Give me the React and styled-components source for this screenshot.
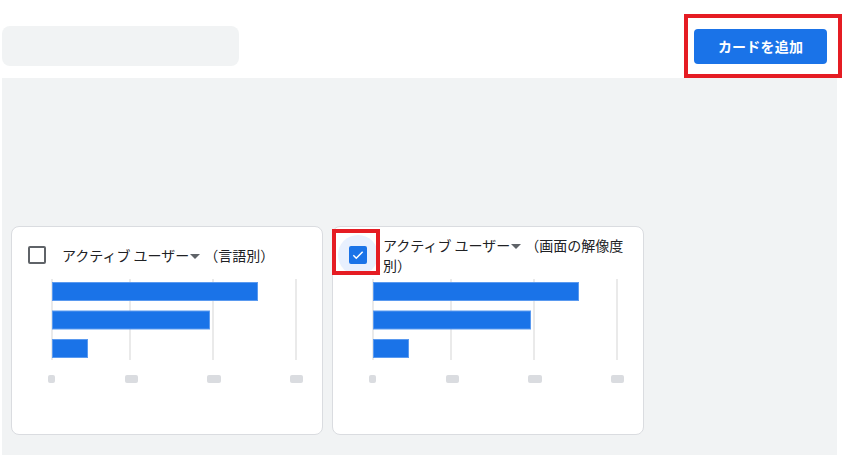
import React from "react";
import styled, { createGlobalStyle } from "styled-components";

const GlobalStyle = createGlobalStyle`
  html, body {
    margin: 0;
    padding: 0;
    background: #ffffff;
  }
  body {
    font-family: "Noto Sans CJK JP", "Noto Sans", Roboto, sans-serif;
    color: #202124;
  }
`;

const cards = [
  { title: "アクティブ ユーザー", suffix: "（言語別）", checked: false, bars: [205, 157, 35] },
  { title: "アクティブ ユーザー", suffix: "（画面の解像度別）", checked: true, bars: [205, 157, 35] },
];

export default function App() {
  return (
    <>
      <GlobalStyle />
      <Page>
        <TopBar>
          <SearchPlaceholder />
          <ButtonWrap>
            <AddButton>カードを追加</AddButton>
            <Highlight $top={-15} $left={-10} $right={-15} $bottom={-14} />
          </ButtonWrap>
        </TopBar>
        <Board>
          {cards.map((c, i) => (
            <Card key={i}>
              <CardHeader>
                <CheckWrap $active={c.checked}>
                  <Checkbox $checked={c.checked}>
                    {c.checked && (
                      <svg width="16" height="16" viewBox="0 0 24 24">
                        <path d="M4 12.5l5 5 11-11" fill="none" stroke="#fff" strokeWidth="2.6" />
                      </svg>
                    )}
                  </Checkbox>
                  {c.checked && <Highlight $top={-6} $left={-6} $right={-2} $bottom={0} />}
                </CheckWrap>
                <Title>
                  {c.title}
                  <Caret />
                  {c.suffix}
                </Title>
              </CardHeader>
              <BarChart bars={c.bars} />
            </Card>
          ))}
        </Board>
      </Page>
    </>
  );
}

function BarChart({ bars }) {
  const grid = [7, 85, 168, 251];
  const labels = [
    [3, 7],
    [80, 13],
    [162, 14],
    [245, 13],
  ];
  return (
    <Chart width="270" height="110" viewBox="0 0 270 110">
      {grid.map((x, i) => (
        <rect key={i} x={x - 0.75} y="0" width="1.5" height="81" fill="#e3e3e3" />
      ))}
      {bars.map((w, i) => (
        <rect
          key={i}
          x="7.5"
          y={3.5 + i * 28.5}
          width={w}
          height="18"
          fill="#1a73e8"
          stroke="#5a9af0"
          strokeWidth="1"
        />
      ))}
      {labels.map(([x, w], i) => (
        <rect key={i} x={x} y="96" width={w} height="8" rx="2" fill="#dadce0" />
      ))}
    </Chart>
  );
}

const Page = styled.div`
  width: 835px;
  margin-left: 2px;
`;

const TopBar = styled.div`
  height: 78px;
  box-sizing: border-box;
  padding: 26px 10px 12px 0;
  display: flex;
  align-items: center;
  justify-content: space-between;
`;

const SearchPlaceholder = styled.div`
  width: 237px;
  height: 40px;
  border-radius: 8px;
  background: #f1f3f4;
`;

const ButtonWrap = styled.div`
  position: relative;
  display: flex;
`;

const AddButton = styled.button`
  height: 35px;
  width: 133px;
  border: none;
  border-radius: 4px;
  background: #1a73e8;
  color: #ffffff;
  font-family: "Noto Sans CJK JP", "Noto Sans", sans-serif;
  font-size: 14px;
  font-weight: 600;
  letter-spacing: 0.2px;
  cursor: pointer;
`;

const Highlight = styled.div`
  position: absolute;
  top: ${(p) => p.$top}px;
  left: ${(p) => p.$left}px;
  right: ${(p) => p.$right}px;
  bottom: ${(p) => p.$bottom}px;
  border: 4px solid #e51c23;
  pointer-events: none;
`;

const Board = styled.div`
  background: #f1f3f4;
  height: 377px;
  box-sizing: border-box;
  padding: 148px 9px 20px 9px;
  display: flex;
  gap: 9px;
  align-items: flex-start;
`;

const Card = styled.div`
  width: 312px;
  height: 209px;
  box-sizing: border-box;
  background: #ffffff;
  border: 1px solid #dadce0;
  border-radius: 8px;
  padding: 8px 15px 0 5px;
  display: flex;
  flex-direction: column;
`;

const CardHeader = styled.div`
  display: flex;
  align-items: center;
  min-height: 40px;
`;

const CheckWrap = styled.div`
  position: relative;
  flex: none;
  width: 40px;
  height: 40px;
  border-radius: 50%;
  background: ${(p) => (p.$active ? "#e8f0fe" : "transparent")};
  display: flex;
  align-items: center;
  justify-content: center;
`;

const Checkbox = styled.div`
  width: 18px;
  height: 18px;
  box-sizing: border-box;
  border-radius: 2px;
  border: 2px solid ${(p) => (p.$checked ? "#1a73e8" : "#5f6368")};
  background: ${(p) => (p.$checked ? "#1a73e8" : "#ffffff")};
  display: flex;
  align-items: center;
  justify-content: center;
`;

const Title = styled.div`
  margin-left: 5px;
  font-size: 14px;
  line-height: 20px;
  color: #202124;
`;

const Caret = styled.span`
  display: inline-block;
  width: 0;
  height: 0;
  margin: 0 4px 2px 1px;
  vertical-align: middle;
  border-left: 5px solid transparent;
  border-right: 5px solid transparent;
  border-top: 5px solid #5f6368;
`;

const Chart = styled.svg`
  display: block;
  margin: 4px 0 0 28px;
`;
